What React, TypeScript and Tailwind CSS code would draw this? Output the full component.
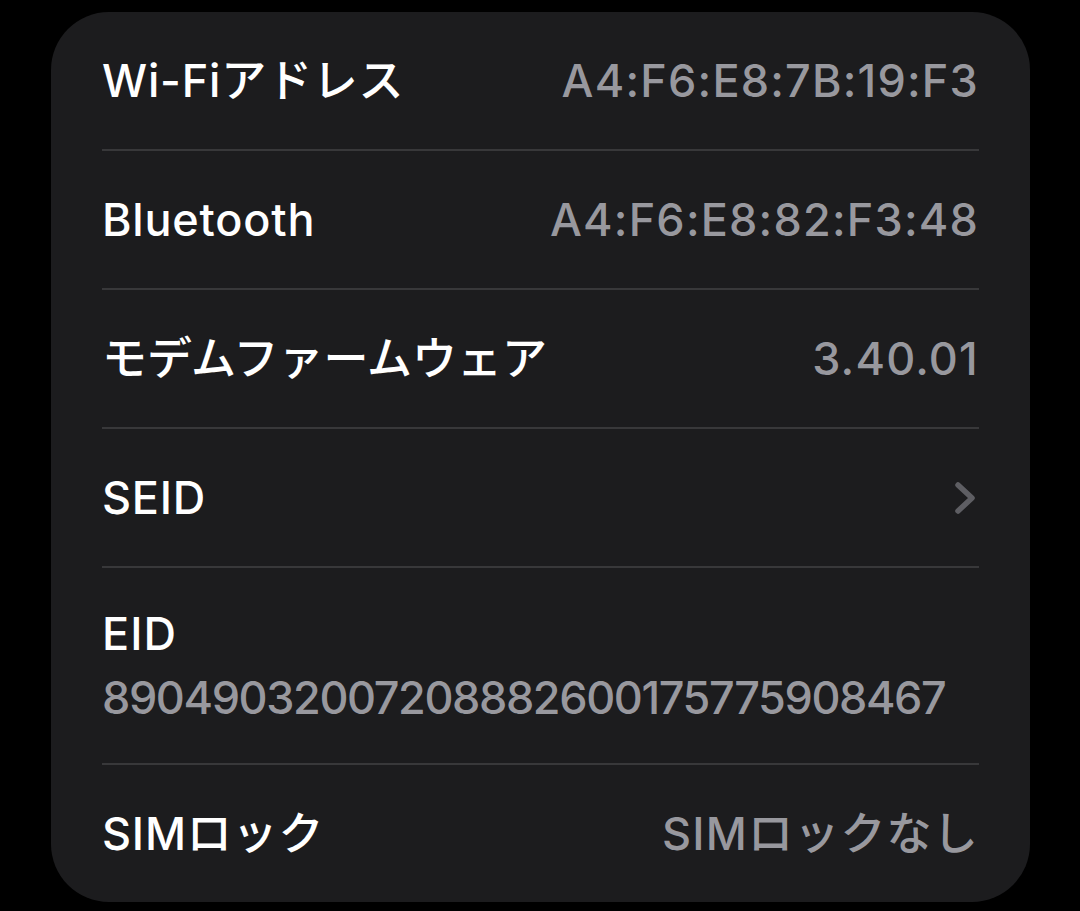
import React from "react";

const font = { fontFamily: 'Inter, "Noto Sans CJK JP", sans-serif' };

type Row = { label: string; value?: string; chevron?: boolean; stacked?: boolean; labelTrack?: string };

const rows: Row[] = [
  { label: "Wi-Fiアドレス", value: "A4:F6:E8:7B:19:F3" },
  { label: "Bluetooth", value: "A4:F6:E8:82:F3:48" },
  { label: "モデムファームウェア", value: "3.40.01", labelTrack: "tracking-[0px]" },
  { label: "SEID", chevron: true },
  { label: "EID", value: "89049032007208882600175775908467", stacked: true },
  { label: "SIMロック", value: "SIMロックなし" },
];

function Chevron() {
  return (
    <svg width="24" height="34" viewBox="0 0 24 34" fill="none" className="mr-[1px]">
      <path d="M4 4l14 13-14 13" stroke="#5e5e63" strokeWidth="5.5" strokeLinecap="round" strokeLinejoin="round" />
    </svg>
  );
}

export default function App() {
  return (
    <div className="w-[1080px] h-[911px] bg-black pt-[12px] pl-[51px]" style={font}>
      <div className="w-[979px] h-[890px] bg-[#1c1c1e] rounded-[58px] px-[51px] flex flex-col">
        {rows.map((r, i) => (
          <div key={r.label} className="flex flex-col">
            {r.stacked ? (
              <div className="h-[195px] flex flex-col justify-center gap-[12px]">
                <div className="text-[45px] font-medium text-white leading-[52px] tracking-[1px]">{r.label}</div>
                <div className="text-[45px] font-medium text-[#98989e] leading-[52px] tracking-[-1.4px]">{r.value}</div>
              </div>
            ) : (
              <div className="h-[137px] flex items-center justify-between">
                <div className={`text-[45px] font-medium text-white ${r.labelTrack ?? "tracking-[0.8px]"}`}>{r.label}</div>
                {r.chevron ? (
                  <Chevron />
                ) : (
                  <div className="text-[45px] font-medium text-[#98989e] tracking-[1.2px]">{r.value}</div>
                )}
              </div>
            )}
            {i < rows.length - 1 && <div className="h-[2px] bg-[#38383a]" />}
          </div>
        ))}
      </div>
    </div>
  );
}
